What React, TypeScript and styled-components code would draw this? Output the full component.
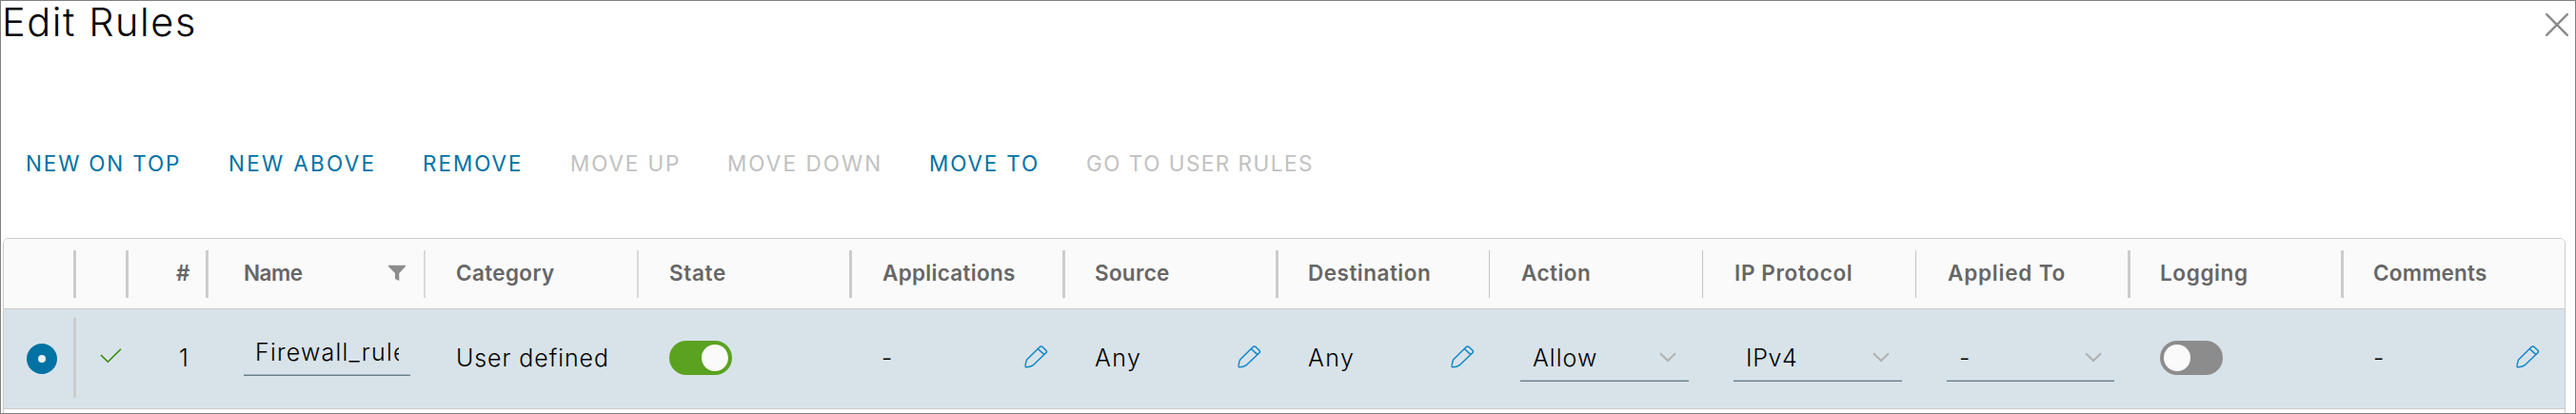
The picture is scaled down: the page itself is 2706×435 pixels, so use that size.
import React from "react";
import styled, { createGlobalStyle } from "styled-components";

const GlobalStyle = createGlobalStyle`
  *, *::before, *::after { box-sizing: border-box; }
  body { margin: 0; background: #fff; }
`;

const Dialog = styled.main`
  display: flex;
  flex-direction: column;
  width: 2706px;
  height: 435px;
  border: 1px solid #808080;
  background: #fff;
  color: #000;
  font-family: Inter, "Liberation Sans", sans-serif;
  overflow: hidden;
`;

const TitleBar = styled.header`
  display: flex;
  flex: none;
  justify-content: space-between;
  align-items: flex-start;
  height: 149px;
  padding: 0 6px 0 1px;
`;

const Title = styled.h1`
  margin: 0;
  font-size: 41.5px;
  line-height: 44px;
  font-weight: 300;
  letter-spacing: 1.56px;
`;

const IconButton = styled.button`
  display: flex;
  flex: none;
  padding: 0;
  border: 0;
  background: none;
`;

const CloseButton = styled(IconButton)`
  margin-top: 12px;
`;

const Toolbar = styled.nav`
  display: flex;
  flex: none;
  height: 100px;
  padding-left: 26px;
`;

const Action = styled.button<{ $width: number; $spacing: number }>`
  flex: none;
  width: ${(p) => p.$width}px;
  height: 44px;
  padding: 0;
  border: 0;
  background: none;
  color: #0072a3;
  font: 400 22.5px/44px Inter, "Liberation Sans", sans-serif;
  letter-spacing: ${(p) => p.$spacing}px;
  text-align: left;
  white-space: nowrap;

  &:disabled {
    color: #c1c1c1;
  }
`;

const Table = styled.section`
  flex: none;
  width: 2692px;
  height: 200px;
  margin-left: 2px;
  border: 1px solid #ccc;
  border-radius: 6px 6px 0 0;
  overflow: hidden;
`;

const Row = styled.div`
  display: grid;
  grid-template-columns: 73px 55px 84px 229px 224px 223px 224px 224px 224px 224px 224px 223px 224px 1fr;
`;

const HeaderRow = styled(Row)`
  height: 74px;
  padding: 12px 0;
  background: #fafafa;
  border-bottom: 1px solid #ccc;
`;

const BodyRow = styled(Row)`
  height: 105px;
  padding: 9px 0 11px;
  background: #d8e3e9;
  border-bottom: 1px solid #ccc;
`;

const HeaderCell = styled.div<{ $rule?: number; $tone?: string; $spacing?: number; $indent?: number }>`
  display: flex;
  align-items: center;
  height: 50px;
  padding: 0 20px 3px ${(p) => (p.$indent ?? 34) - (p.$rule ?? 0)}px;
  border-left: ${(p) => p.$rule ?? 0}px solid ${(p) => p.$tone ?? "#ccc"};
  color: #666;
  font-size: 22.5px;
  font-weight: 600;
  letter-spacing: ${(p) => p.$spacing ?? 0}px;
  white-space: nowrap;
`;

const NameHeader = styled(HeaderCell)`
  justify-content: space-between;
  padding-right: 19px;
  padding-left: 37px;
`;

const NumberHeader = styled(HeaderCell)`
  padding-left: 50px;
`;

const Cell = styled.div<{ $spacing?: number }>`
  display: flex;
  align-items: center;
  min-width: 0;
  height: 84px;
  padding: 0 15px 1px 34px;
  font-size: 25px;
  font-weight: 300;
  letter-spacing: ${(p) => p.$spacing ?? 0}px;
  white-space: nowrap;
`;

const RadioCell = styled(Cell)`
  padding: 2px 0 0 24px;
`;

const CheckCell = styled(Cell)`
  padding: 0 0 4px 25px;
  border-left: 3px solid #ccc;
`;

const NumberCell = styled(Cell)`
  padding-left: 56px;
`;

const NameCell = styled(Cell)`
  padding: 0 14px 12px 40px;
`;

const EditCell = styled(Cell)<{ $last?: boolean }>`
  justify-content: space-between;
  padding-right: ${(p) => (p.$last ? 26 : 15)}px;
`;

const SelectCell = styled(Cell)`
  padding: 0 14px 0 33px;
`;

const Radio = styled.span`
  display: flex;
  align-items: center;
  justify-content: center;
  width: 32px;
  height: 32px;
  border-radius: 50%;
  background: #0072a3;

  &::after {
    content: "";
    width: 8px;
    height: 8px;
    border-radius: 50%;
    background: #e9f0f3;
  }
`;

const Field = styled.div`
  flex: 1;
  min-width: 0;
  height: 50px;
  padding: 0 12px;
  border-bottom: 1px solid #6a7e88;
  box-shadow: inset 0 -1px 0 #a9b8c0;
  line-height: 50px;
`;

const FieldText = styled.div`
  overflow: hidden;
  height: 48px;
`;

const Select = styled.div`
  flex: 1;
  display: flex;
  align-items: center;
  justify-content: space-between;
  height: 50px;
  padding: 0 13px 0 13px;
  border-bottom: 1px solid #6a7e88;
  box-shadow: inset 0 -1px 0 #a9b8c0;
`;

const Switch = styled.span<{ $on?: boolean }>`
  display: flex;
  align-items: center;
  justify-content: ${(p) => (p.$on ? "flex-end" : "flex-start")};
  width: 66px;
  height: 36px;
  padding: 0 4px;
  border-radius: 18px;
  background: ${(p) => (p.$on ? "#5aa220" : "#8c8c8c")};

  &::after {
    content: "";
    width: 28px;
    height: 28px;
    border-radius: 50%;
    background: #fafafa;
  }
`;

const CloseIcon = () => (
  <svg width="26" height="26" viewBox="0 0 26 26" fill="none" stroke="#8c8c8c" strokeWidth="2.5" strokeLinecap="round">
    <path d="M2.2 2.2 23.8 23.8M23.8 2.2 2.2 23.8" />
  </svg>
);

const FilterIcon = () => (
  <svg width="18" height="18" viewBox="0 0 18 18" fill="#8c8c8c">
    <path d="M0 .7h18v1.2L11.3 9v8L7 15V9L0 1.9z" />
  </svg>
);

const CheckIcon = () => (
  <svg width="24" height="18" viewBox="0 0 24 18" fill="none" stroke="#318700" strokeWidth="1.5">
    <path d="M1 8 8.3 15.3 22 1.8" />
  </svg>
);

const PencilIcon = () => (
  <svg width="25" height="24" viewBox="0 0 25 24" fill="none" stroke="#0f86c8" strokeWidth="1.5" strokeLinejoin="round">
    <path d="M2.6 15 16 1.8Q17.6.3 19.3 1.7L23 5.2Q24 6.5 22.8 7.8L9.7 20.3Q6.5 22.8 1.6 22.8.2 22.2 2.6 15zM14.3 3.5 20.9 9.6" />
  </svg>
);

const ChevronIcon = () => (
  <svg width="18" height="11" viewBox="0 0 18 11" fill="none" stroke="#b0b2b3" strokeWidth="2">
    <path d="M1 1.2 9 9 17 1.2" />
  </svg>
);

const PencilButton = styled(IconButton)`
  padding-bottom: 2px;
`;

const EditButton = () => (
  <PencilButton aria-label="Edit">
    <PencilIcon />
  </PencilButton>
);

const actions = [
  { label: "NEW ON TOP", width: 213, spacing: 1.83 },
  { label: "NEW ABOVE", width: 204, spacing: 2.3 },
  { label: "REMOVE", width: 155, spacing: 1.94 },
  { label: "MOVE UP", width: 165, spacing: 1.85, disabled: true },
  { label: "MOVE DOWN", width: 212, spacing: 2.05, disabled: true },
  { label: "MOVE TO", width: 165, spacing: 1.83 },
  { label: "GO TO USER RULES", width: 260, spacing: 1.49, disabled: true },
];

const columns = [
  { label: "Category", rule: 2, tone: "#d9d9d9", spacing: 0.35 },
  { label: "State", rule: 2, tone: "#d9d9d9", spacing: 0.67 },
  { label: "Applications", rule: 3, spacing: 0.3, indent: 35 },
  { label: "Source", rule: 3, spacing: 0.27, indent: 34 },
  { label: "Destination", rule: 3, spacing: 0.5 },
  { label: "Action", rule: 1, tone: "#c4c4c4", spacing: 0.47 },
  { label: "IP Protocol", rule: 1, tone: "#c4c4c4", spacing: 0.65 },
  { label: "Applied To", rule: 1, tone: "#c4c4c4", spacing: 0.8 },
  { label: "Logging", rule: 3, spacing: 0.63 },
  { label: "Comments", rule: 3, spacing: 0.2 },
];

export default function App() {
  return (
    <>
      <GlobalStyle />
      <Dialog>
        <TitleBar>
          <Title>Edit Rules</Title>
          <CloseButton aria-label="Close">
            <CloseIcon />
          </CloseButton>
        </TitleBar>
        <Toolbar>
          {actions.map((a) => (
            <Action key={a.label} $width={a.width} $spacing={a.spacing} disabled={a.disabled}>
              {a.label}
            </Action>
          ))}
        </Toolbar>
        <Table>
          <HeaderRow>
            <HeaderCell />
            <HeaderCell $rule={3} />
            <NumberHeader $rule={3}>#</NumberHeader>
            <NameHeader $rule={3} $spacing={-0.5}>
              Name
              <FilterIcon />
            </NameHeader>
            {columns.map((c) => (
              <HeaderCell key={c.label} $rule={c.rule} $tone={c.tone} $spacing={c.spacing} $indent={c.indent}>
                {c.label}
              </HeaderCell>
            ))}
          </HeaderRow>
          <BodyRow>
            <RadioCell>
              <Radio />
            </RadioCell>
            <CheckCell>
              <CheckIcon />
            </CheckCell>
            <NumberCell>1</NumberCell>
            <NameCell $spacing={1.21}>
              <Field>
                <FieldText>Firewall_rule</FieldText>
              </Field>
            </NameCell>
            <Cell $spacing={0.9}>User defined</Cell>
            <Cell>
              <Switch $on />
            </Cell>
            <EditCell>
              -<EditButton />
            </EditCell>
            <EditCell $spacing={1.43}>
              Any
              <EditButton />
            </EditCell>
            <EditCell $spacing={1.43}>
              Any
              <EditButton />
            </EditCell>
            <SelectCell $spacing={1.03}>
              <Select>
                Allow
                <ChevronIcon />
              </Select>
            </SelectCell>
            <SelectCell $spacing={0.61}>
              <Select>
                IPv4
                <ChevronIcon />
              </Select>
            </SelectCell>
            <SelectCell>
              <Select>
                -<ChevronIcon />
              </Select>
            </SelectCell>
            <Cell>
              <Switch />
            </Cell>
            <EditCell $last>
              -<EditButton />
            </EditCell>
          </BodyRow>
        </Table>
      </Dialog>
    </>
  );
}
